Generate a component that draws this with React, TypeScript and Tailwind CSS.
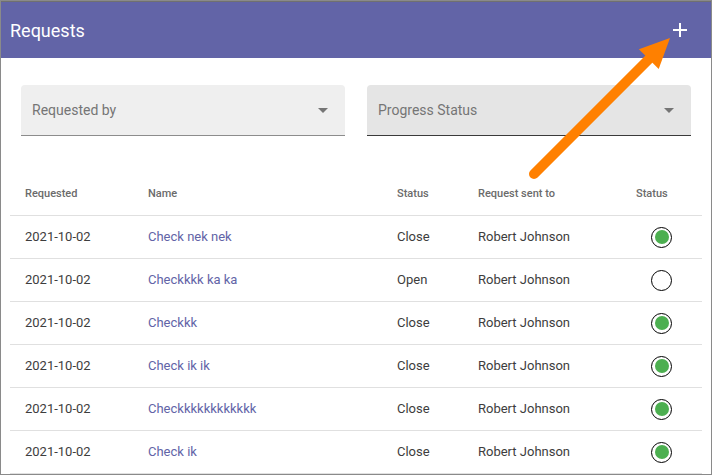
const rows = [
  { date: "2021-10-02", name: "Check nek nek", status: "Close", to: "Robert Johnson", done: true },
  { date: "2021-10-02", name: "Checkkkk ka ka", status: "Open", to: "Robert Johnson", done: false },
  { date: "2021-10-02", name: "Checkkk", status: "Close", to: "Robert Johnson", done: true },
  { date: "2021-10-02", name: "Check ik ik", status: "Close", to: "Robert Johnson", done: true },
  { date: "2021-10-02", name: "Checkkkkkkkkkkkk", status: "Close", to: "Robert Johnson", done: true },
  { date: "2021-10-02", name: "Check ik", status: "Close", to: "Robert Johnson", done: true },
];

const cols = "grid grid-cols-[123px_249px_81px_158px_81px]";

function Select({ label, active }: { label: string; active?: boolean }) {
  return (
    <div
      className={`flex h-[51px] w-[324px] items-center justify-between rounded-t px-[11px] ${
        active ? "border-b border-[#3a3a3a] bg-[#e5e5e5]" : "border-b border-[#8c8c8c] bg-[#efefef]"
      }`}
    >
      <span className="text-[14px] text-[#757575]">{label}</span>
      <span className="mr-[6px] h-0 w-0 border-x-[5px] border-t-[5px] border-x-transparent border-t-[#757575]" />
    </div>
  );
}

function StatusDot({ done }: { done: boolean }) {
  return (
    <div className="ml-[15px] flex h-[21px] w-[21px] items-center justify-center rounded-full border-[1.5px] border-black bg-white">
      {done && <div className="h-[14px] w-[14px] rounded-full bg-[#4caf50]" />}
    </div>
  );
}

export default function App() {
  return (
    <div
      className="relative h-[475px] w-[712px] overflow-hidden border border-[#8a8a8a] bg-white"
      style={{ fontFamily: "Roboto, 'Liberation Sans', sans-serif" }}
    >
      {/* Header */}
      <div className="flex h-[57px] items-center justify-between border-t border-[#707070] bg-[#6264a7] pl-[9px] pr-[24px]">
        <h1 className="text-[18px] text-white">Requests</h1>
        <svg width="14" height="14" viewBox="0 0 14 14">
          <path d="M7 0v14M0 7h14" stroke="white" strokeWidth="2" />
        </svg>
      </div>

      {/* Filters */}
      <div className="mt-[27px] flex gap-[22px] px-[20px]">
        <Select label="Requested by" />
        <Select label="Progress Status" active />
      </div>

      {/* Table */}
      <div className="mx-[9px] mt-[37px] w-[692px]">
        <div className={`${cols} h-[43px] items-center border-b border-[#e0e0e0] text-[11px] font-medium text-[#6b6b6b]`}>
          <div className="pl-[15px]">Requested</div>
          <div className="pl-[15px]">Name</div>
          <div className="pl-[15px]">Status</div>
          <div className="pl-[15px]">Request sent to</div>
          <div className="pl-[15px]">Status</div>
        </div>
        {rows.map((r, i) => (
          <div key={i} className={`${cols} h-[43px] items-center border-b border-[#e0e0e0] text-[13px] text-[#3d3d3d]`}>
            <div className="pl-[15px]">{r.date}</div>
            <div className="pl-[15px] text-[#6264a7]">{r.name}</div>
            <div className="pl-[15px]">{r.status}</div>
            <div className="pl-[15px]">{r.to}</div>
            <div className="pl-[15px]">
              <StatusDot done={r.done} />
            </div>
          </div>
        ))}
      </div>

      {/* Callout arrow */}
      <svg className="pointer-events-none absolute left-[-1px] top-[-1px]" width="712" height="475">
        <line x1="534" y1="174" x2="652" y2="56" stroke="#ff8000" strokeWidth="10" strokeLinecap="round" />
        <polygon points="670,38 638.9,49.3 658.7,69.1" fill="#ff8000" />
      </svg>
    </div>
  );
}
